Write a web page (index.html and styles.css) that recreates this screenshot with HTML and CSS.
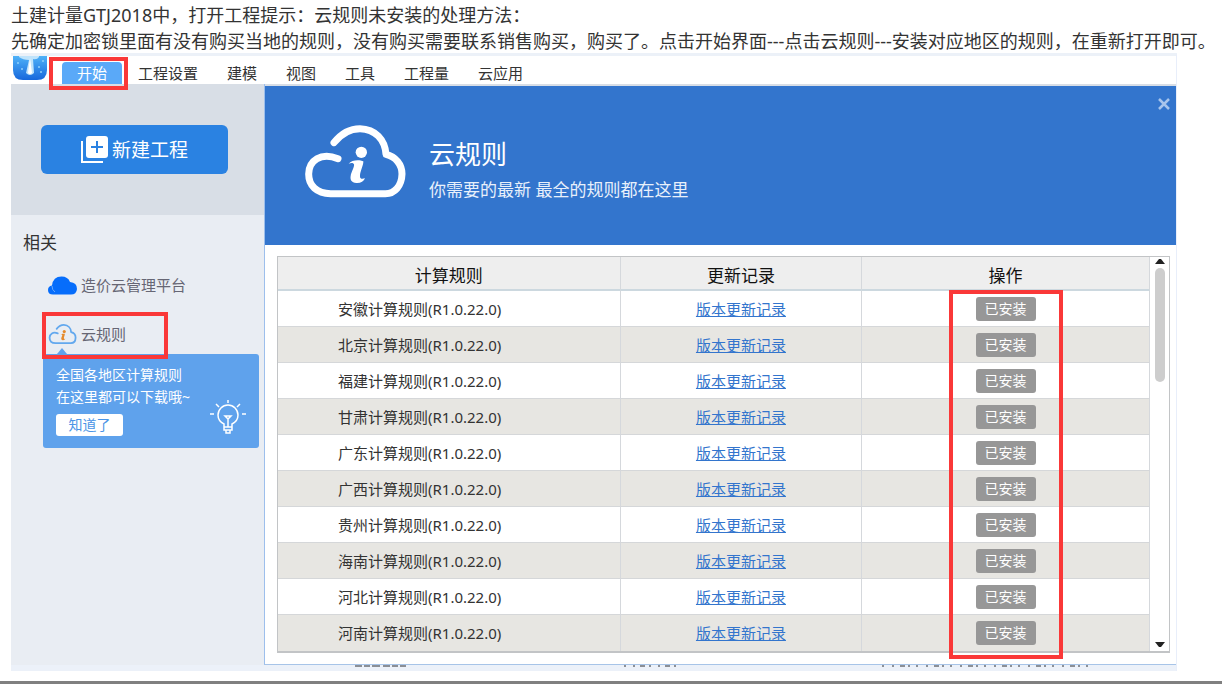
FILE: index.html
```html
<!DOCTYPE html>
<html lang="zh-CN">
<head>
<meta charset="utf-8">
<title>云规则</title>
<link rel="stylesheet" href="styles.css">
</head>
<body>
<svg class="defs" width="0" height="0" aria-hidden="true">
  <symbol id="cloud-info" viewBox="130 98 312 228">
    <g fill="none" stroke="currentColor" stroke-linecap="round" stroke-linejoin="round">
      <path d="M223 157C241 134 266 115 301 115C347 116 376 148 379 192C408 199 427 222 427 251C426 286 406 310 377 310H213C171 309 147 286 147 251C148 211 183 185 235 205"/>
    </g>
  </symbol>
  <symbol id="letter-i" viewBox="130 98 312 228">
    <circle cx="305" cy="186" r="17"/>
    <path d="M267 220C276 208 300 207 311 213C312 224 301 244 301 256C300 265 306 267 316 264C312 274 302 279 290 278C275 277 271 268 273 257C275 244 285 230 283 222C280 217 274 218 267 220Z"/>
  </symbol>
</svg>
<div class="page">
  <div class="intro">
    <p>土建计量GTJ2018中，打开工程提示：云规则未安装的处理方法：</p>
    <p>先确定加密锁里面有没有购买当地的规则，没有购买需要联系销售购买，购买了。点击开始界面---点击云规则---安装对应地区的规则，在重新打开即可。</p>
  </div>
  <main class="app">
    <nav class="menu">
      <svg class="logo" width="34" height="24" viewBox="0 0 34 24" aria-hidden="true">
        <defs><linearGradient id="lg" x1="0" y1="0" x2="0" y2="1"><stop offset="0" stop-color="#4fb2f8"/><stop offset="1" stop-color="#1667dc"/></linearGradient></defs>
        <path d="M0 0H34V14Q34 24 24 24H10Q0 24 0 14Z" fill="url(#lg)"/>
        <path d="M6 0H26V1Q24 4 20 3L21 17Q17 21 13 17L16 4Q10 4 6 1Z" fill="#bfe3fb"/>
        <path d="M17 2L19 17Q17 19 15 17Z" fill="#fff"/>
        <g fill="#8fd0fb"><circle cx="5" cy="7" r="1"/><circle cx="9" cy="13" r="1"/><circle cx="26" cy="11" r="1"/><circle cx="30" cy="5" r="1"/><circle cx="28" cy="16" r="1"/></g>
      </svg>
      <a class="tab active" href="#start">开始<span class="mark mark-tab"></span></a>
      <a class="tab" href="#set">工程设置</a>
      <a class="tab" href="#model">建模</a>
      <a class="tab" href="#view">视图</a>
      <a class="tab" href="#tool">工具</a>
      <a class="tab" href="#qty">工程量</a>
      <a class="tab" href="#cloud">云应用</a>
    </nav>
    <div class="body">
      <aside class="side">
        <div class="create">
          <button class="new" type="button">
            <svg width="27" height="27" viewBox="0 0 27 27" aria-hidden="true"><rect x="5" y="0" width="22" height="22" rx="3" fill="#fff"/><path d="M16 5V17M10 11H22" stroke="#2a82e2" stroke-width="2"/><path d="M1 5V26H22" fill="none" stroke="#fff" stroke-width="2"/></svg>
            新建工程
          </button>
        </div>
        <h2>相关</h2>
        <a class="link" href="#platform">
          <svg width="29" height="19" viewBox="0 0 29 19" aria-hidden="true"><path d="M5 18.500Q0 18.500 0 14Q0 10 4 9.500Q5 0.500 13.500 0.500Q20 0.500 22 6Q29 6.500 29 13Q28.500 18.500 23 18.500Z" fill="#066dfb"/><path d="M4 10Q4 14 7 16" fill="none" stroke="#69a9fa"/></svg>
          造价云管理平台
        </a>
        <a class="link rules" href="#rules">
          <svg class="small-cloud" width="29" height="22" aria-hidden="true"><use href="#cloud-info"/><use class="i" href="#letter-i"/></svg>
          云规则
          <span class="mark mark-rules"></span>
        </a>
        <div class="tip">
          <div class="tip-main">
            <p>全国各地区计算规则<br>在这里都可以下载哦~</p>
            <button type="button">知道了</button>
          </div>
          <svg class="bulb" width="36" height="36" viewBox="0 0 36 36" fill="none" stroke="#fff" stroke-width="1.500" aria-hidden="true">
            <path d="M14 28V25Q8 22 8 16A10 10 0 0 1 28 16Q28 22 22 25V28ZM14 28V31H22V28M16 31V34H20V31M18 28V20L15 17H21L18 20M18 1V4M6 5L9 8M30 5L27 8M0 15H4M32 15H36"/>
          </svg>
        </div>
      </aside>
      <section class="panel">
        <header class="banner">
          <svg class="big-cloud" width="104" height="76" aria-hidden="true"><use href="#cloud-info"/><use href="#letter-i"/></svg>
          <div>
            <h1>云规则</h1>
            <p>你需要的最新 最全的规则都在这里</p>
          </div>
          <button class="close" type="button" aria-label="关闭"><svg width="12" height="12" viewBox="0 0 12 12" aria-hidden="true"><path d="M1 1L11 11M11 1L1 11" stroke="#a8c5ec" stroke-width="2.500"/></svg></button>
        </header>
        <div class="grid">
          <table>
            <thead><tr><th class="c1">计算规则</th><th class="c2">更新记录</th><th class="c3">操作<span class="mark mark-col"></span></th></tr></thead>
            <tbody>
              <tr><td>安徽计算规则(R1.0.22.0)</td><td><a href="#r1">版本更新记录</a></td><td><button type="button">已安装</button></td></tr>
              <tr><td>北京计算规则(R1.0.22.0)</td><td><a href="#r2">版本更新记录</a></td><td><button type="button">已安装</button></td></tr>
              <tr><td>福建计算规则(R1.0.22.0)</td><td><a href="#r3">版本更新记录</a></td><td><button type="button">已安装</button></td></tr>
              <tr><td>甘肃计算规则(R1.0.22.0)</td><td><a href="#r4">版本更新记录</a></td><td><button type="button">已安装</button></td></tr>
              <tr><td>广东计算规则(R1.0.22.0)</td><td><a href="#r5">版本更新记录</a></td><td><button type="button">已安装</button></td></tr>
              <tr><td>广西计算规则(R1.0.22.0)</td><td><a href="#r6">版本更新记录</a></td><td><button type="button">已安装</button></td></tr>
              <tr><td>贵州计算规则(R1.0.22.0)</td><td><a href="#r7">版本更新记录</a></td><td><button type="button">已安装</button></td></tr>
              <tr><td>海南计算规则(R1.0.22.0)</td><td><a href="#r8">版本更新记录</a></td><td><button type="button">已安装</button></td></tr>
              <tr><td>河北计算规则(R1.0.22.0)</td><td><a href="#r9">版本更新记录</a></td><td><button type="button">已安装</button></td></tr>
              <tr><td>河南计算规则(R1.0.22.0)</td><td><a href="#r10">版本更新记录</a></td><td><button type="button">已安装</button></td></tr>
            </tbody>
          </table>
          <div class="scroll">
            <svg width="10" height="5" viewBox="0 0 10 5" aria-hidden="true"><path d="M0 5L4 0H6L10 5Z" fill="#222"/></svg>
            <div class="thumb"></div>
            <svg width="10" height="5" viewBox="0 0 10 5" aria-hidden="true"><path d="M0 0H10L6 5H4Z" fill="#222"/></svg>
          </div>
        </div>
      </section>
    </div>
    <footer class="edge">
      <svg width="100%" height="2" aria-hidden="true"><g stroke="#8b8f96" stroke-width="2"><path d="M344 1H395" stroke-dasharray="7 2 6 2 8 3"/><path d="M613 1H672" stroke-dasharray="2 7 2 5 5 4"/><path d="M871 1H1082" stroke-dasharray="2 8 2 6 5 3 2 6"/></g></svg>
    </footer>
  </main>
  <div class="rule"></div>
</div>
</body>
</html>
```
FILE: styles.css
```css
* { box-sizing: border-box; }
body {
  margin: 0;
  background: #fff;
  color: #333;
  font-family: "Noto Sans", "Noto Sans CJK SC", sans-serif;
  font-size: 15px;
  line-height: 22px;
}
p, h1, h2 { margin: 0; font-weight: 400; }
button { border: 0; padding: 0; font: inherit; }
svg { display: block; flex: none; }
.defs { position: absolute; }
.page { overflow: hidden; }
.intro {
  padding: 2px 0 0 11px;
  font-size: 18px;
  line-height: 26px;
  height: 53px;
  white-space: nowrap;
}
.app {
  margin: 0 45px 0 11px;
  border-top: 3px solid #ecf1f8;
  border-right: 1px solid #e8eefa;
}
.mark { position: absolute; border: 4px solid #fa3838; pointer-events: none; z-index: 2; }

.menu { display: flex; align-items: flex-start; height: 28px; padding-left: 2px; }
.tab {
  position: relative;
  margin: 6px 0 0 29px;
  color: #333;
  text-decoration: none;
  line-height: 23px;
}
.tab.active {
  width: 60px;
  height: 22px;
  margin-left: 15px;
  border-radius: 4px 4px 0 0;
  background: #5aa9f8;
  color: #fff;
  text-align: center;
}
.tab.active + .tab { margin-left: 16px; }
.mark-tab { inset: -5px -6px -6px -13px; }

.body { display: flex; align-items: stretch; }
.side { width: 253px; flex: none; background: #e9edf3; }
.create { height: 131px; padding: 41px 36px 0 30px; background: #d8dee6; }
.new {
  display: flex;
  align-items: center;
  justify-content: center;
  gap: 4px;
  width: 100%;
  height: 49px;
  border-radius: 6px;
  background: #2a82e2;
  color: #fff;
  font-size: 19px;
}
h2 { padding: 16px 0 0 12px; font-size: 17px; line-height: 24px; }
.link {
  position: relative;
  display: flex;
  align-items: center;
  gap: 4px;
  height: 22px;
  margin: 19px 0 0 37px;
  color: #666674;
  text-decoration: none;
}
.link.rules { margin-top: 27px; }
.small-cloud { color: #62a8ee; stroke-width: 19; }
.small-cloud .i { fill: #e58a2c; }
.mark-rules { left: -6px; top: -11px; width: 126px; height: 47px; }
.tip {
  position: relative;
  display: flex;
  justify-content: space-between;
  margin: 9px 5px 0 32px;
  height: 94px;
  padding: 10px 13px 0;
  border-radius: 3px;
  background: #5fa2ec;
  color: #fff;
  font-size: 14px;
}
.tip::before {
  content: "";
  position: absolute;
  left: 14px;
  top: -6px;
  border: 5px solid transparent;
  border-top: 0;
  border-bottom: 6px solid #5fa2ec;
}
.tip button {
  display: block;
  width: 67px;
  height: 22px;
  margin-top: 6px;
  border-radius: 3px;
  background: #fff;
  color: #4b95e6;
  line-height: 22px;
}
.bulb { margin: 35px 0 0 -8px; }

.panel {
  flex: 1;
  min-width: 0;
  border-left: 1px solid #9dbfec;
  border-bottom: 1px solid #a7c4e8;
  padding-bottom: 11px;
}
.banner {
  display: flex;
  align-items: flex-start;
  height: 161px;
  padding: 37px 6px 0 38px;
  border-top: 2px solid #d8dee6;
  background: #3375cd;
  color: #fff;
}
.big-cloud { stroke-width: 21; fill: #fff; margin-right: 22px; }
.big-cloud use + use, .small-cloud use + use { stroke: none; }
.banner h1 { font-size: 26px; line-height: 36px; padding-top: 13px; }
.banner p { font-size: 17px; line-height: 24px; padding-top: 6px; color: #e8f0fb; }
.close { margin: -25px 0 0 auto; background: none; }

.grid {
  display: flex;
  margin: 11px 6px 0 12px;
  border: 1px solid #c2c4c6;
  border-bottom-width: 2px;
}
table { flex: 1; table-layout: fixed; border-spacing: 0; }
th, td { padding: 0; text-align: center; border-right: 1px solid #d5d8dc; border-bottom: 1px solid #d5d7d9; }
th {
  position: relative;
  height: 34px;
  background: #eee;
  border-bottom: 2px solid #ccd8df;
  color: #111;
  font-size: 17px;
  font-weight: 400;
  padding-top: 5px;
}
.c1 { width: 39.3%; }
.c2 { width: 27.7%; }
td { height: 36px; }
tbody tr:last-child td { border-bottom: 0; }
tbody tr:nth-child(even) { background: #e7e6e2; }
td:first-child { padding-left: 60px; text-align: left; }
td a { color: #3375cd; }
td button {
  display: block;
  width: 60px;
  height: 24px;
  margin: 0 auto;
  border-radius: 3px;
  background: #979797;
  color: #fff;
  font-size: 14px;
  line-height: 24px;
}
.mark-col { left: calc(50% - 57px); top: 33px; width: 114px; height: 369px; }
.scroll {
  display: flex;
  flex-direction: column;
  align-items: center;
  width: 19px;
  padding: 2px 0 4px;
}
.thumb { width: 10px; height: 114px; margin: 4px 0 auto; border-radius: 5px; background: #cdcdcd; }
.edge { height: 6px; background: #ecf1f9; }
.rule { height: 3px; margin-top: 10px; background: #808080; }
```
